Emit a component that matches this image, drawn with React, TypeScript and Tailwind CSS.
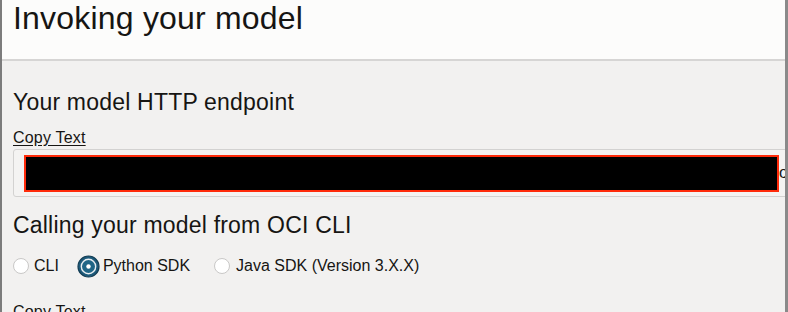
export default function App() {
  const font = { fontFamily: '"Liberation Sans", Arial, sans-serif' }
  return (
    <div className="flex h-[312px] w-full overflow-hidden bg-[#f2f1f0] text-[#161513]" style={font}>
      <div className="w-[2px] shrink-0 bg-[#7c7c7c]" />
      <div className="flex min-w-0 flex-1 flex-col overflow-hidden">
        <header className="h-[61px] shrink-0 border-b-2 border-[#d6d5d4] bg-[#fcfcfb] pl-[11px]">
          <h1 className="text-[32px] leading-[36px] tracking-[0.2px]">Invoking your model</h1>
        </header>

        <section className="flex flex-col pl-[11px] pt-[27px]">
          <h2 className="text-[23px] leading-[28px] tracking-[0.2px]">Your model HTTP endpoint</h2>
          <a className="mt-[12px] w-max text-[16px] leading-[20px] tracking-[0.2px] underline underline-offset-2">Copy Text</a>
          <div className="mt-[1px] flex h-[48px] w-[790px] items-center rounded-[3px] border border-[#d3d2d1] bg-[#f4f3f2] pl-[10px]">
            <div className="h-[37px] w-[755px] shrink-0 border-2 border-[#ff2b0a] bg-black" />
            <span className="text-[16px] leading-none">o</span>
          </div>

          <h2 className="mt-[14px] text-[23px] leading-[28px] tracking-[0.2px]">Calling your model from OCI CLI</h2>
          <div className="mt-[15px] flex h-[24px] items-center text-[16px]">
            <label className="flex items-center">
              <span className="h-4 w-4 rounded-full border border-[#c9c8c7] bg-white" />
              <span className="ml-[5px]">CLI</span>
            </label>
            <label className="ml-[22px] flex items-center">
              <span className="flex h-4 w-4 items-center justify-center">
                <svg width="23" height="23" viewBox="0 0 23 23" className="-m-[4px] shrink-0">
                  <circle cx="11.5" cy="11.5" r="10.5" fill="#1d5a7a" stroke="#143e55" strokeWidth="1.2" />
                  <circle cx="11.5" cy="11.5" r="7.2" fill="#1f6586" stroke="#e9eef1" strokeWidth="1.4" />
                  <circle cx="11.5" cy="11.5" r="2.2" fill="#ffffff" />
                </svg>
              </span>
              <span className="ml-[6px]">Python SDK</span>
            </label>
            <label className="ml-[24px] flex items-center">
              <span className="h-4 w-4 rounded-full border border-[#c9c8c7] bg-white" />
              <span className="ml-[6px]">Java SDK (Version 3.X.X)</span>
            </label>
          </div>

          <a className="mt-[24px] w-max text-[16px] leading-[20px] tracking-[0.2px] underline underline-offset-2">Copy Text</a>
        </section>
      </div>
      <div className="w-[3px] shrink-0 bg-[#8a8a8a]" />
    </div>
  )
}
